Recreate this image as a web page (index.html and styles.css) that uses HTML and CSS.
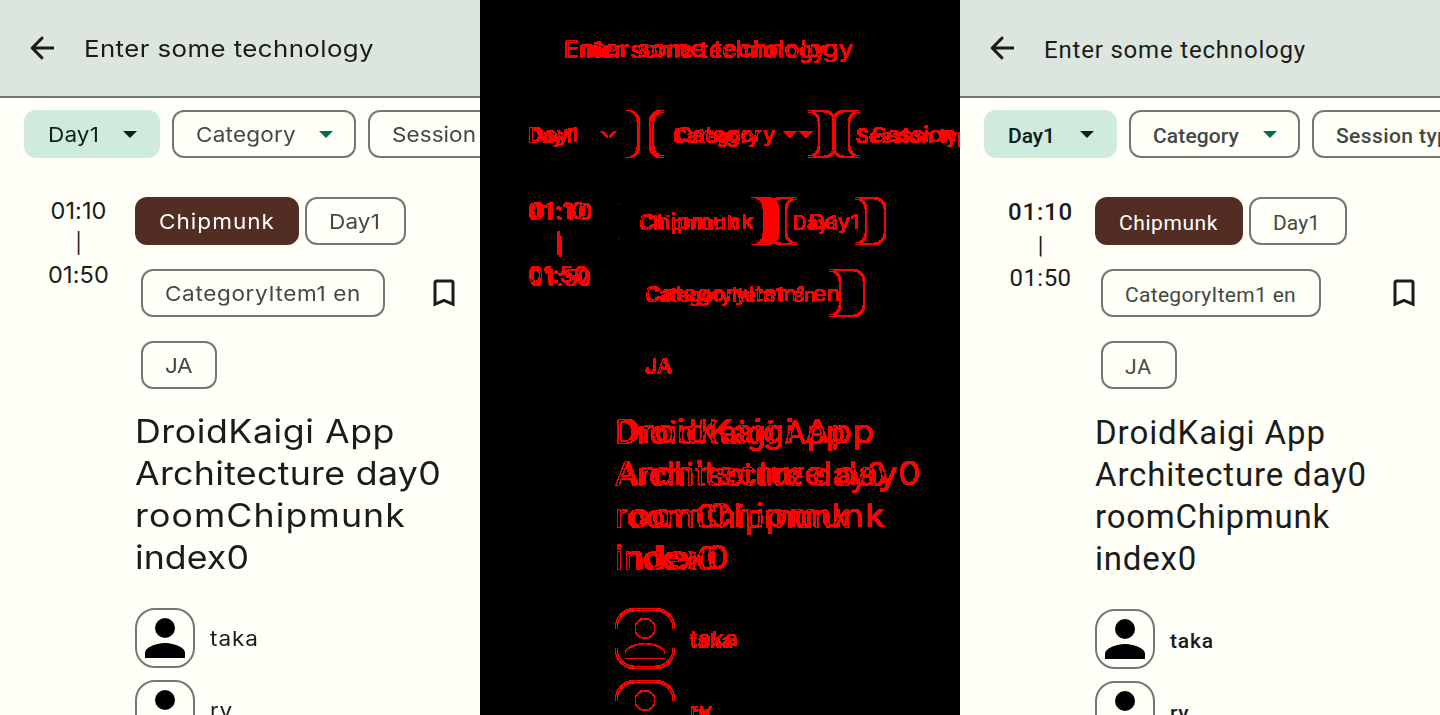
FILE: index.html
```html
<!DOCTYPE html>
<html lang="en">
<head>
<meta charset="utf-8">
<title>Session search comparison</title>
<link rel="stylesheet" href="styles.css">
</head>
<body>
<svg class="defs" width="0" height="0"><filter id="diff" x="0" y="0" width="1" height="1" color-interpolation-filters="sRGB"><feColorMatrix type="matrix" values="60 60 60 0 -0.3  0 0 0 0 0  0 0 0 0 0  0 0 0 0 1"/></filter></svg>
<main class="compare">
  <section class="panel" id="before"></section>
  <section class="panel delta" id="delta"></section>
  <section class="panel" id="after"></section>
</main>
<script src="app.js"></script>
</body>
</html>
```
FILE: styles.css
```css
* { box-sizing: border-box; }
body { margin: 0; background: #fffff8; overflow: hidden; }
.defs { position: absolute; }
.compare { display: grid; grid-template-columns: repeat(3, 480px); height: 715px; }
.panel { display: grid; overflow: hidden; height: 715px; min-width: 0; }
.delta { filter: url(#diff); background: #000; }
.delta .screen { grid-area: 1 / 1; }
.delta .screen + .screen { mix-blend-mode: difference; }
.screen { width: 480px; height: 715px; overflow: hidden; background: #fffff8; color: #191c1a; }
.wide { font-family: Inter, "Liberation Sans", sans-serif; --drop: 2px; --stretch: 1.1; }
.narrow { font-family: Roboto, "Liberation Sans", sans-serif; --drop: 4px; --stretch: 1; }
.fit { display: inline-block; white-space: nowrap; transform: scaleX(var(--stretch)); transform-origin: left; }
svg { display: block; flex: none; }

.bar { display: flex; align-items: center; gap: 24px; height: 98px; padding: 0 24px; background: #dde6de; border-bottom: 2px solid #707974; }
.query { font-size: 23.5px; line-height: 30px; padding-top: 1px; }
.narrow .query { font-size: 24px; padding-top: 3px; }

.filters { display: flex; gap: 12px; padding: 12px 0 0 24px; }
.chip { flex: none; display: flex; align-items: center; justify-content: space-between; height: 48px; padding: 0 21px 0 22px; border: 2px solid #707974; border-radius: 12px; color: #404944; font-size: 20.5px; line-height: 28px; }
.narrow .chip { font-size: 21px; }
.chip .fit { padding-top: var(--drop); }
.narrow .filters .chip { font-weight: 500; }
.chip.on { background: #cfebde; border-color: #cfebde; color: #0a2018; }
.chip.room { background: #522d23; border-color: #522d23; color: #fff; }
.caret { fill: #006c4f; }
.on .caret { fill: #0a2018; }

.session { display: grid; grid-template-columns: 135px 291px 54px; padding-top: 39px; height: 231px; }
.time { --stretch: 1; display: flex; flex-direction: column; align-items: center; padding-left: 22px; margin-top: -2px; font-size: 23.5px; line-height: 32px; }
.narrow .time { padding-left: 26px; margin-top: -1px; font-size: 24px; line-height: 33px; }
.narrow .time :first-child { font-weight: 500; }
.time .dash { font-size: 20px; }
.narrow .time .dash { font-size: 23px; }
.tags { display: flex; flex-direction: column; gap: 24px; }
.row { display: flex; gap: 6px; }
.row + .row { padding-left: 6px; }
.bookmark { margin-top: 78px; }

.title { margin: 22px 0 0 135px; font-size: 32.5px; line-height: 42px; height: 168px; font-weight: 400; }
.title .fit { display: block; width: max-content; }
.narrow .title { margin-top: 23px; font-size: 33px; }
.speakers { display: flex; flex-direction: column; gap: 12px; padding: 29px 0 0 135px; }
.speaker { display: flex; align-items: center; gap: 15px; font-size: 20.5px; line-height: 28px; }
.speaker .fit { padding-top: 2px; }
.narrow .speaker { font-size: 21px; font-weight: 500; }
.narrow .speaker .fit { padding-top: 3px; }
.avatar { width: 60px; height: 60px; border: 2px solid #707974; border-radius: 20px; }
.avatar svg { margin: -2px; }
```
FILE: app.js
```js
const variants = {
  wide: {
    query: 290, chips: [[136, 51], [184, 100], [230, 138]], times: [56, 61],
    tags: [[164, 116], [101, 51], [244, 196], [76, 27]],
    title: [260, 306, 271, 114], names: [49, 23]
  },
  narrow: {
    query: 262, chips: [[133, 47], [171, 86], [208, 125]], times: [65, 62],
    tags: [[148, 99], [98, 47], [220, 171], [76, 27]],
    title: [231, 272, 235, 102], names: [44, 19]
  }
};

const text = (value, width) => `<span class="fit" data-width="${width}">${value}</span>`;
const caret = '<svg class="caret" width="14" height="7" viewBox="0 0 14 7"><path d="M0 0h14L7 7z"/></svg>';

const screen = (name) => {
  const v = variants[name];
  const filter = (label, i) =>
    `<div class="chip${i ? '' : ' on'}" style="width:${v.chips[i][0]}px">${text(label, v.chips[i][1])}${caret}</div>`;
  const tag = (label, i) =>
    `<div class="chip${i ? '' : ' room'}" style="width:${v.tags[i][0]}px">${text(label, v.tags[i][1])}</div>`;
  const speaker = (label, i) => `<div class="speaker"><div class="avatar"><svg width="60" height="60" viewBox="0 0 24 24"><circle cx="12" cy="8" r="4"/><path d="M12 14c-2.67 0-8 1.34-8 4v2h16v-2c0-2.66-5.33-4-8-4z"/></svg></div>${text(label, v.names[i])}</div>`;
  return `<div class="screen ${name}">
    <header class="bar">
      <svg width="36" height="36" viewBox="0 0 24 24" fill="#191c1a"><path d="M20 11H7.83l4.88-4.88a1 1 0 0 0 0-1.41 1 1 0 0 0-1.41 0l-6.59 6.59a1 1 0 0 0 0 1.41l6.59 6.59a1 1 0 0 0 1.41-1.41L7.83 13H20z"/></svg>
      <div class="query">${text('Enter some technology', v.query)}</div>
    </header>
    <nav class="filters">${['Day1', 'Category', 'Session type'].map(filter).join('')}</nav>
    <div class="session">
      <div class="time">${text('01:10', v.times[0])}<span class="dash">|</span>${text('01:50', v.times[1])}</div>
      <div class="tags">
        <div class="row">${tag('Chipmunk', 0)}${tag('Day1', 1)}</div>
        <div class="row">${tag('CategoryItem1 en', 2)}</div>
        <div class="row">${tag('JA', 3)}</div>
      </div>
      <svg class="bookmark" width="36" height="36" viewBox="0 0 24 24" fill="#191c1a"><path d="M17 3H7c-1.1 0-2 .9-2 2v16l7-3 7 3V5c0-1.1-.9-2-2-2zm0 15l-5-2.18L7 18V5h10v13z"/></svg>
    </div>
    <h1 class="title">${['DroidKaigi App', 'Architecture day0', 'roomChipmunk', 'index0'].map((t, i) => text(t, v.title[i])).join('')}</h1>
    <div class="speakers">${['taka', 'ry'].map(speaker).join('')}</div>
  </div>`;
};

document.getElementById('before').innerHTML = screen('wide');
document.getElementById('delta').innerHTML = screen('wide') + screen('narrow');
document.getElementById('after').innerHTML = screen('narrow');

// Track each label out to its measured width.
document.querySelectorAll('.fit').forEach((el) => {
  const stretch = Number(getComputedStyle(el).getPropertyValue('--stretch'));
  const spare = (Number(el.dataset.width) - el.getBoundingClientRect().width) / stretch;
  el.style.letterSpacing = `${spare / el.textContent.length}px`;
});
```
